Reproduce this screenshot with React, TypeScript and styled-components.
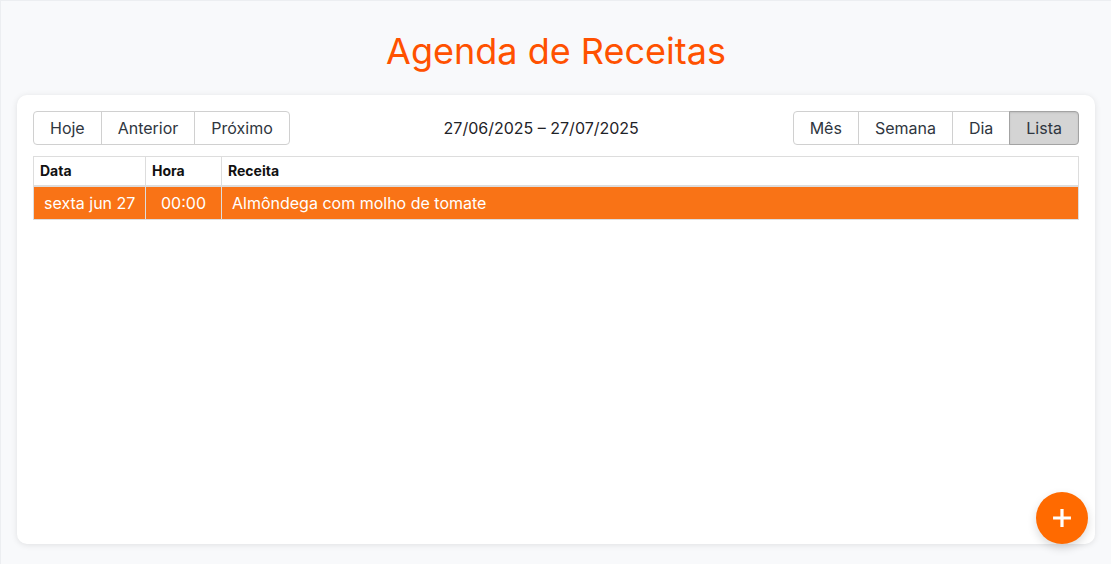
import styled, { createGlobalStyle } from "styled-components";

const GlobalStyle = createGlobalStyle`
  html, body {
    margin: 0;
    padding: 0;
    background: #f8f9fb;
    font-family: Inter, "Noto Sans", sans-serif;
  }
  * { box-sizing: border-box; }
`;

const Page = styled.div`
  min-height: 564px;
  border-top: 1px solid #eceef1;
  border-left: 1px solid #eceef1;
  padding: 0 16px 20px 16px;
  display: flex;
  flex-direction: column;
`;

const Title = styled.h1`
  margin: 28px 0 22px;
  height: 44px;
  line-height: 44px;
  text-align: center;
  font-size: 36px;
  font-weight: 400;
  color: #ff5100;
`;

const Card = styled.div`
  position: relative;
  height: 449px;
  background: #fff;
  border-radius: 10px;
  box-shadow: 0 1px 6px rgba(0, 0, 0, 0.1);
  padding: 16px;
`;

const Toolbar = styled.div`
  display: flex;
  align-items: center;
  justify-content: space-between;
  height: 34px;
  margin-bottom: 11px;
`;

const Group = styled.div`
  display: flex;
`;

const Btn = styled.button<{ $active?: boolean }>`
  height: 34px;
  padding: 0 16px;
  font-family: inherit;
  font-size: 16px;
  color: #2f3640;
  background: ${(p) => (p.$active ? "#d4d4d4" : "#fff")};
  border: 1px solid ${(p) => (p.$active ? "#a3a3a3" : "#d0d0d0")};
  margin-left: -1px;
  box-shadow: ${(p) => (p.$active ? "inset 0 1px 2px rgba(0,0,0,0.1)" : "none")};
  cursor: pointer;
  &:first-child {
    margin-left: 0;
    border-radius: 4px 0 0 4px;
  }
  &:last-child {
    border-radius: 0 4px 4px 0;
  }
`;

const RangeTitle = styled.div`
  font-size: 16px;
  color: #1f2328;
`;

const Table = styled.table`
  width: 100%;
  border-collapse: collapse;
  border: 1px solid #dddddd;
  table-layout: fixed;
`;

const Th = styled.th<{ $w?: number }>`
  width: ${(p) => (p.$w ? `${p.$w}px` : "auto")};
  height: 29px;
  text-align: left;
  padding: 0 6px;
  font-size: 14px;
  font-weight: 700;
  color: #111;
  border: 1px solid #dddddd;
  border-bottom: 2px solid #dddddd;
`;

const EventRow = styled.tr`
  background: #f97316;
  color: #fff;
`;

const Td = styled.td<{ $center?: boolean }>`
  height: 34px;
  padding: 0 10px;
  font-size: 16px;
  border: 1px solid #dddddd;
  border-top: none;
  text-align: ${(p) => (p.$center ? "center" : "left")};
  white-space: nowrap;
`;

const Fab = styled.button`
  position: absolute;
  right: 7px;
  bottom: 0;
  width: 52px;
  height: 52px;
  border-radius: 50%;
  border: none;
  background: #ff6a00;
  box-shadow: 0 4px 10px rgba(0, 0, 0, 0.15);
  display: flex;
  align-items: center;
  justify-content: center;
  cursor: pointer;
  svg {
    width: 22px;
    height: 22px;
  }
`;

export default function App() {
  return (
    <>
      <GlobalStyle />
      <Page>
        <Title>Agenda de Receitas</Title>
        <Card>
          <Toolbar>
            <Group>
              <Btn>Hoje</Btn>
              <Btn>Anterior</Btn>
              <Btn>Próximo</Btn>
            </Group>
            <RangeTitle>27/06/2025 – 27/07/2025</RangeTitle>
            <Group>
              <Btn>Mês</Btn>
              <Btn>Semana</Btn>
              <Btn>Dia</Btn>
              <Btn $active>Lista</Btn>
            </Group>
          </Toolbar>
          <Table>
            <thead>
              <tr>
                <Th $w={112}>Data</Th>
                <Th $w={76}>Hora</Th>
                <Th>Receita</Th>
              </tr>
            </thead>
            <tbody>
              <EventRow>
                <Td>sexta jun 27</Td>
                <Td $center>00:00</Td>
                <Td>Almôndega com molho de tomate</Td>
              </EventRow>
            </tbody>
          </Table>
          <Fab aria-label="Adicionar">
            <svg viewBox="0 0 24 24" fill="none" stroke="#fff" strokeWidth={3.5} strokeLinecap="square">
              <path d="M12 4v16M4 12h16" />
            </svg>
          </Fab>
        </Card>
      </Page>
    </>
  );
}
